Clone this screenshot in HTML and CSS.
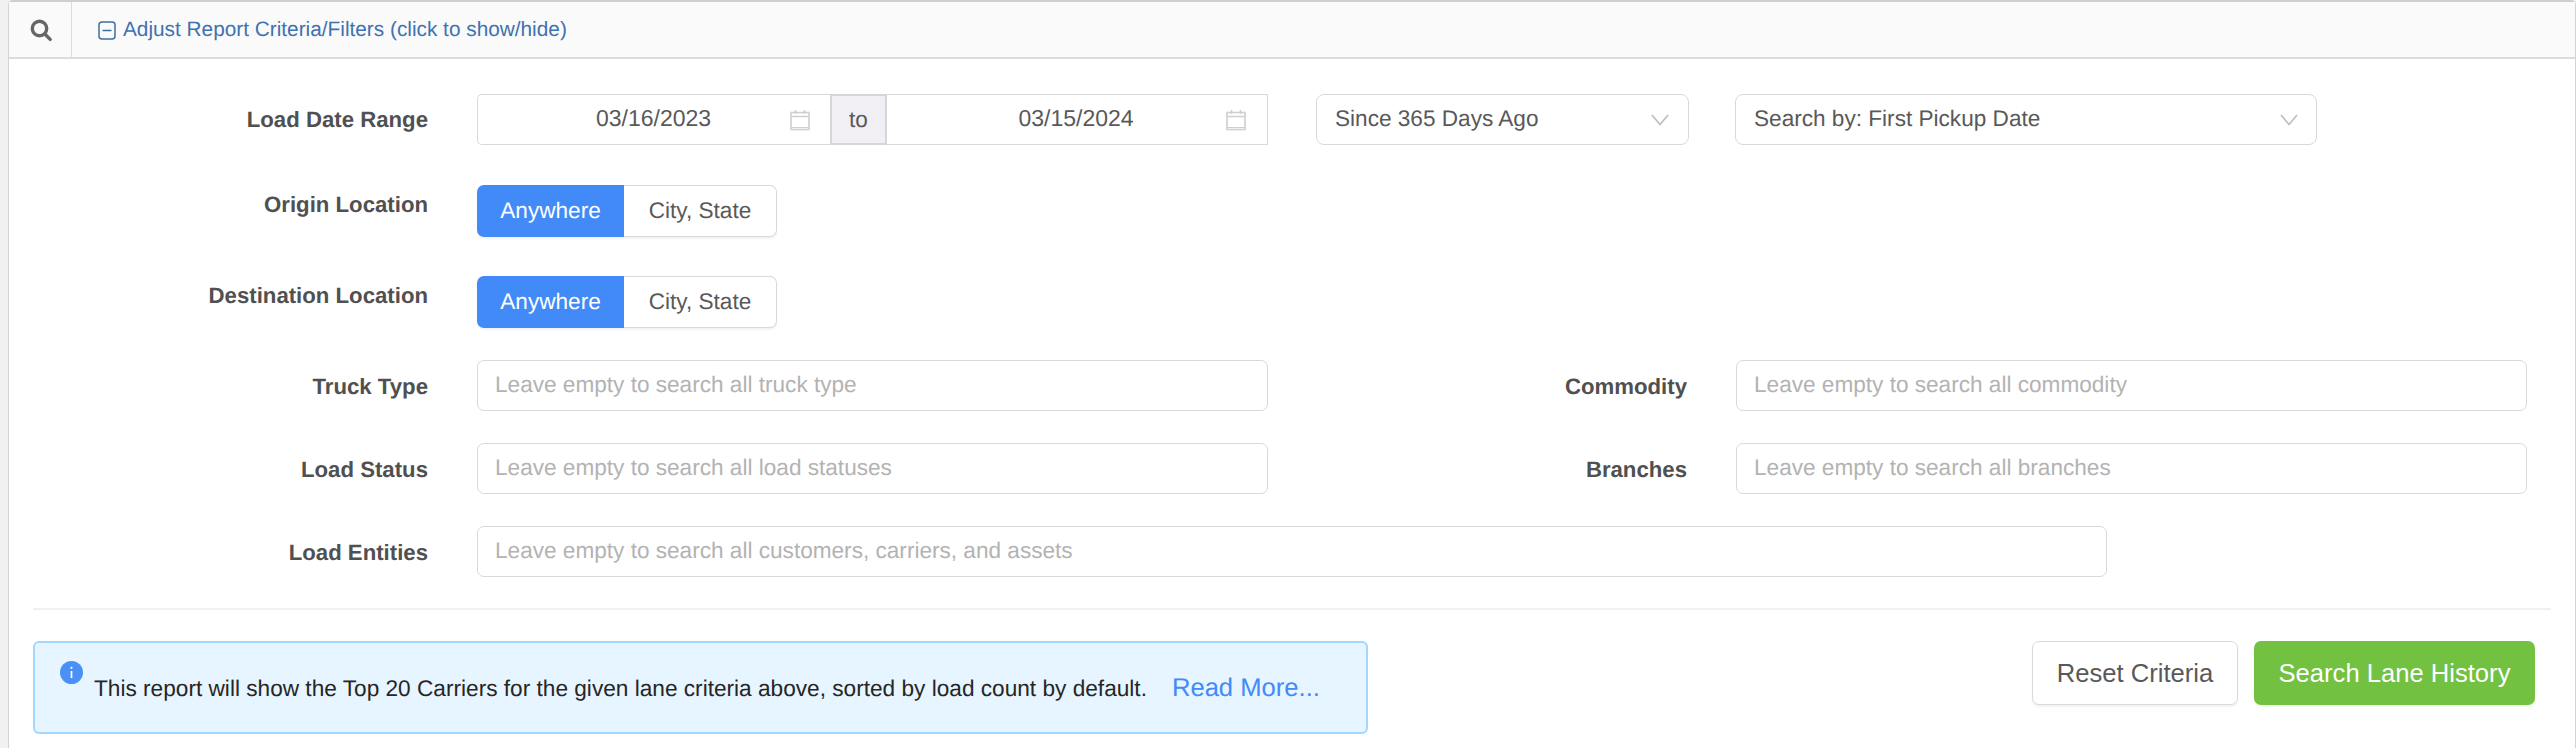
FILE: index.html
```html
<!DOCTYPE html>
<html lang="en">
<head>
<meta charset="utf-8">
<title>Lane History</title>
<link rel="stylesheet" href="styles.css">
</head>
<body>
<main class="panel">
  <header class="panel-head">
    <div class="head-icon">
      <svg width="24" height="24" viewBox="0 0 24 24" fill="none" stroke="#666" stroke-width="3.4"><circle cx="10.5" cy="10.5" r="7.2"/><path d="M15.8 16l5.4 5.4" stroke-linecap="round"/></svg>
    </div>
    <a class="head-link">
      <svg class="minus" width="18" height="19" viewBox="0 0 18 19" fill="none" stroke="#3f6f9f" stroke-width="1.5"><rect x="1" y="1" width="16" height="17" rx="3"/><path d="M4.5 9.5h9"/></svg>
      Adjust Report Criteria/Filters (click to show/hide)
    </a>
  </header>
  <form class="form">
    <div class="row row-date">
      <label class="label">Load Date Range</label>
      <div class="range">
        <div class="date date-start"><span>03/16/2023</span>
          <svg class="cal" width="20" height="22" viewBox="0 0 20 22" fill="none" stroke="#cfcfcf" stroke-width="1.6"><rect x="1" y="3.5" width="18" height="17"/><path d="M1 7.5h18M5.5 1v4M14.5 1v4"/><path d="M1 18.5h18" stroke-width="1"/></svg>
        </div>
        <div class="to">to</div>
        <div class="date date-end"><span>03/15/2024</span>
          <svg class="cal" width="20" height="22" viewBox="0 0 20 22" fill="none" stroke="#cfcfcf" stroke-width="1.6"><rect x="1" y="3.5" width="18" height="17"/><path d="M1 7.5h18M5.5 1v4M14.5 1v4"/><path d="M1 18.5h18" stroke-width="1"/></svg>
        </div>
      </div>
      <div class="select select-since"><span>Since 365 Days Ago</span>
        <svg width="18" height="12" viewBox="0 0 18 12" fill="none" stroke="#bdbdbd" stroke-width="1.6"><path d="M1 1l8 9.500 8-9.500"/></svg>
      </div>
      <div class="select select-search"><span>Search by: First Pickup Date</span>
        <svg width="18" height="12" viewBox="0 0 18 12" fill="none" stroke="#bdbdbd" stroke-width="1.6"><path d="M1 1l8 9.500 8-9.500"/></svg>
      </div>
    </div>
    <div class="row row-origin">
      <label class="label label-high">Origin Location</label>
      <div class="toggle"><span class="toggle-on">Anywhere</span><span class="toggle-off">City, State</span></div>
    </div>
    <div class="row row-dest">
      <label class="label label-high">Destination Location</label>
      <div class="toggle"><span class="toggle-on">Anywhere</span><span class="toggle-off">City, State</span></div>
    </div>
    <div class="row row-truck">
      <label class="label label-low">Truck Type</label>
      <div class="input input-half">Leave empty to search all truck type</div>
      <label class="label label-low label-second">Commodity</label>
      <div class="input input-half">Leave empty to search all commodity</div>
    </div>
    <div class="row row-status">
      <label class="label label-low">Load Status</label>
      <div class="input input-half">Leave empty to search all load statuses</div>
      <label class="label label-low label-second">Branches</label>
      <div class="input input-half">Leave empty to search all branches</div>
    </div>
    <div class="row row-entities">
      <label class="label label-low">Load Entities</label>
      <div class="input input-wide">Leave empty to search all customers, carriers, and assets</div>
    </div>
    <hr class="rule">
    <div class="foot">
      <div class="alert">
        <svg class="info" width="23" height="23" viewBox="0 0 23 23"><circle cx="11.500" cy="11.500" r="11.500" fill="#4a90f5"/><path d="M11.500 10v7" stroke="#fff" stroke-width="1.700"/><circle cx="11.500" cy="6.800" r="1.100" fill="#fff"/></svg>
        <p class="alert-text">This report will show the Top 20 Carriers for the given lane criteria above, sorted by load count by default.<a class="more">Read More...</a></p>
      </div>
      <div class="actions">
        <button type="button" class="btn btn-reset">Reset Criteria</button>
        <button type="button" class="btn btn-go">Search Lane History</button>
      </div>
    </div>
  </form>
</main>
</body>
</html>
```
FILE: styles.css
```css
* { box-sizing: border-box; }
html, body { margin: 0; height: 100%; overflow: hidden; }
body {
  background: #f1f1f1;
  padding-left: 8px;
  font-family: "Liberation Sans", Arial, sans-serif;
  font-size: 22.6px;
  color: #595959;
  text-rendering: geometricPrecision;
}
.panel {
  height: 748px;
  background: #fff;
  border: 1px solid #d4d4d4;
  border-top: 2px solid #cfcfcf;
  border-bottom: 0;
  border-top-left-radius: 5px;
  border-top-right-radius: 5px;
}
.panel-head {
  display: flex;
  height: 57px;
  background: #fafafa;
  border-bottom: 2px solid #dcdcdc;
}
.head-icon {
  width: 63px;
  display: flex;
  align-items: center;
  justify-content: center;
  border-right: 1px solid #dcdcdc;
  padding-left: 2px;
}
.head-link {
  display: flex;
  align-items: center;
  gap: 7px;
  padding: 1px 0 0 26px;
  color: #3f72b0;
  font-size: 20.8px;
}
.form { padding: 35px 24px 0; }
.row { display: flex; align-items: center; }
.row-origin { margin-top: 40px; }
.row-dest { margin-top: 39px; }
.row-truck { margin-top: 32px; }
.row-status { margin-top: 32px; }
.row-entities { margin-top: 32px; }
.label {
  width: 395px;
  flex: none;
  margin-right: 49px;
  text-align: right;
  font-weight: 700;
  font-size: 22.2px;
  color: #505050;
}
.label-high { padding-bottom: 12px; }
.label-low { padding-top: 2px; }
.label-second {
  width: 419px;
  margin-right: 49px;
}
.range { display: flex; width: 791px; height: 51px; margin-right: 48px; }
.date {
  display: flex;
  align-items: center;
  height: 51px;
  border: 1px solid #d9d9d9;
  padding-right: 20px;
  background: #fff;
}
.date span { flex: 1; text-align: center; padding: 0 0 2px 39px; font-size: 23px; }
.date-start { width: 353px; border-radius: 5px 0 0 5px; border-right: 0; }
.date-end { width: 381px; border-left: 0; padding-left: 0; padding-right: 21px; }
.to {
  width: 57px;
  background: #f1eff4;
  border: 2px solid #d6d6d6;
  display: flex;
  align-items: center;
  justify-content: center;
}
.select {
  display: flex;
  align-items: center;
  justify-content: space-between;
  height: 51px;
  border: 1px solid #d9d9d9;
  border-radius: 8px;
  padding: 0 19px 0 18px;
}
.select span { padding-bottom: 2px; }
.select-since { width: 373px; margin-right: 46px; }
.select-search { width: 582px; padding-right: 18px; }
.toggle {
  display: flex;
  height: 52px;
  width: 300px;
  border-radius: 7px;
  box-shadow: 0 2px 2px rgba(0, 0, 0, .05);
}
.toggle-on {
  width: 147px;
  display: flex;
  align-items: center;
  justify-content: center;
  background: #428af7;
  color: #fff;
  border-radius: 7px 0 0 7px;
}
.toggle-off {
  flex: 1;
  display: flex;
  align-items: center;
  justify-content: center;
  border: 1px solid #d9d9d9;
  border-left: 0;
  border-radius: 0 7px 7px 0;
}
.input {
  display: flex;
  align-items: center;
  height: 51px;
  padding: 0 0 1px 17px;
  border: 1px solid #d9d9d9;
  border-radius: 7px;
  color: #b3b3b3;
}
.input-half { width: 791px; }
.input-wide { width: 1630px; }
.rule {
  margin: 31px 0 31px;
  border: 0;
  border-top: 2px solid #f0f0f0;
}
.foot { display: flex; justify-content: space-between; align-items: flex-start; padding-right: 16px; }
.alert {
  display: flex;
  align-items: flex-start;
  width: 1335px;
  height: 93px;
  background: #e6f5ff;
  border: 2px solid #a3d7ff;
  border-radius: 6px;
  padding: 18px 0 0 25px;
}
.info { flex: none; }
.alert-text {
  margin: 14px 0 0 11px;
  font-size: 22.65px;
  line-height: 26px;
  color: #262626;
  white-space: nowrap;
}
.more { margin-left: 25px; font-size: 25.6px; color: #428af7; }
.actions { display: flex; gap: 16px; }
.btn {
  height: 64px;
  font: 25.6px "Liberation Sans", Arial, sans-serif;
  border-radius: 7px;
  box-shadow: 0 2px 2px rgba(0, 0, 0, .05);
}
.btn-reset { width: 206px; background: #fff; border: 1px solid #d9d9d9; color: #595959; }
.btn-go { width: 281px; background: #72c140; border: 0; color: #fff; }
```
